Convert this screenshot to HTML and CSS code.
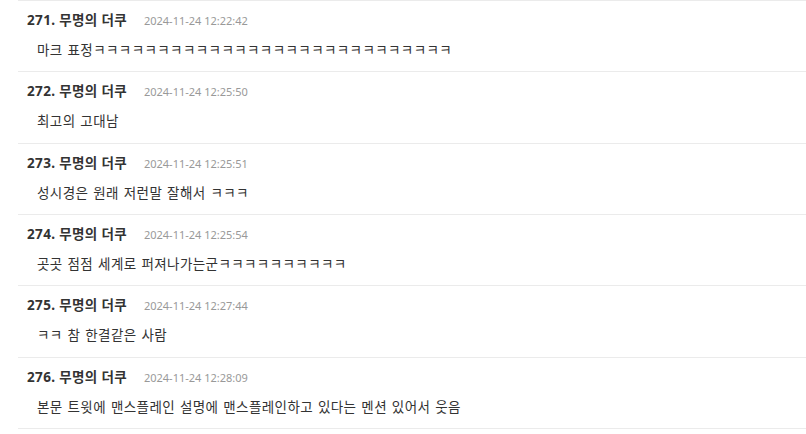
FILE: index.html
```html
<!DOCTYPE html>
<html lang="ko">
<head>
<meta charset="utf-8">
<link rel="stylesheet" href="styles.css">
</head>
<body>
<ul class="comments">
  <li class="comment">
    <div class="meta"><span class="author">271. 무명의 더쿠</span><span class="date">2024-11-24 12:22:42</span></div>
    <div class="text">마크 표정ㅋㅋㅋㅋㅋㅋㅋㅋㅋㅋㅋㅋㅋㅋㅋㅋㅋㅋㅋㅋㅋㅋㅋㅋㅋㅋㅋㅋ</div>
  </li>
  <li class="comment">
    <div class="meta"><span class="author">272. 무명의 더쿠</span><span class="date">2024-11-24 12:25:50</span></div>
    <div class="text">최고의 고대남</div>
  </li>
  <li class="comment">
    <div class="meta"><span class="author">273. 무명의 더쿠</span><span class="date">2024-11-24 12:25:51</span></div>
    <div class="text">성시경은 원래 저런말 잘해서 ㅋㅋㅋ</div>
  </li>
  <li class="comment">
    <div class="meta"><span class="author">274. 무명의 더쿠</span><span class="date">2024-11-24 12:25:54</span></div>
    <div class="text">곳곳 점점 세계로 퍼져나가는군ㅋㅋㅋㅋㅋㅋㅋㅋㅋㅋ</div>
  </li>
  <li class="comment">
    <div class="meta"><span class="author">275. 무명의 더쿠</span><span class="date">2024-11-24 12:27:44</span></div>
    <div class="text">ㅋㅋ 참 한결같은 사람</div>
  </li>
  <li class="comment">
    <div class="meta"><span class="author">276. 무명의 더쿠</span><span class="date">2024-11-24 12:28:09</span></div>
    <div class="text">본문 트윗에 맨스플레인 설명에 맨스플레인하고 있다는 멘션 있어서 웃음</div>
  </li>
</ul>
</body>
</html>
```

FILE: styles.css
```css
html, body {
  margin: 0;
  padding: 0;
  background: #fff;
}
body {
  font-family: "Noto Sans", "Noto Sans CJK KR", sans-serif;
  color: #333;
}
.comments {
  list-style: none;
  margin: 0 0 0 18px;
  padding: 0;
  border-top: 1px solid #ebebeb;
}
.comment {
  padding: 10px 0 12.33px 9px;
  border-bottom: 1px solid #ebebeb;
}
.meta {
  display: flex;
  align-items: baseline;
  gap: 17px;
  height: 18px;
  line-height: 18px;
  overflow: hidden;
}
.author {
  font-size: 13.5px;
  font-weight: bold;
  letter-spacing: 0.35px;
  color: #333;
}
.date {
  font-size: 11px;
  color: #999;
}
.text {
  margin-top: 12px;
  padding-left: 10px;
  font-size: 13.5px;
  height: 18px;
  line-height: 18px;
  letter-spacing: 0.4px;
  color: #333;
  word-spacing: 1px;
  white-space: nowrap;
}
```
